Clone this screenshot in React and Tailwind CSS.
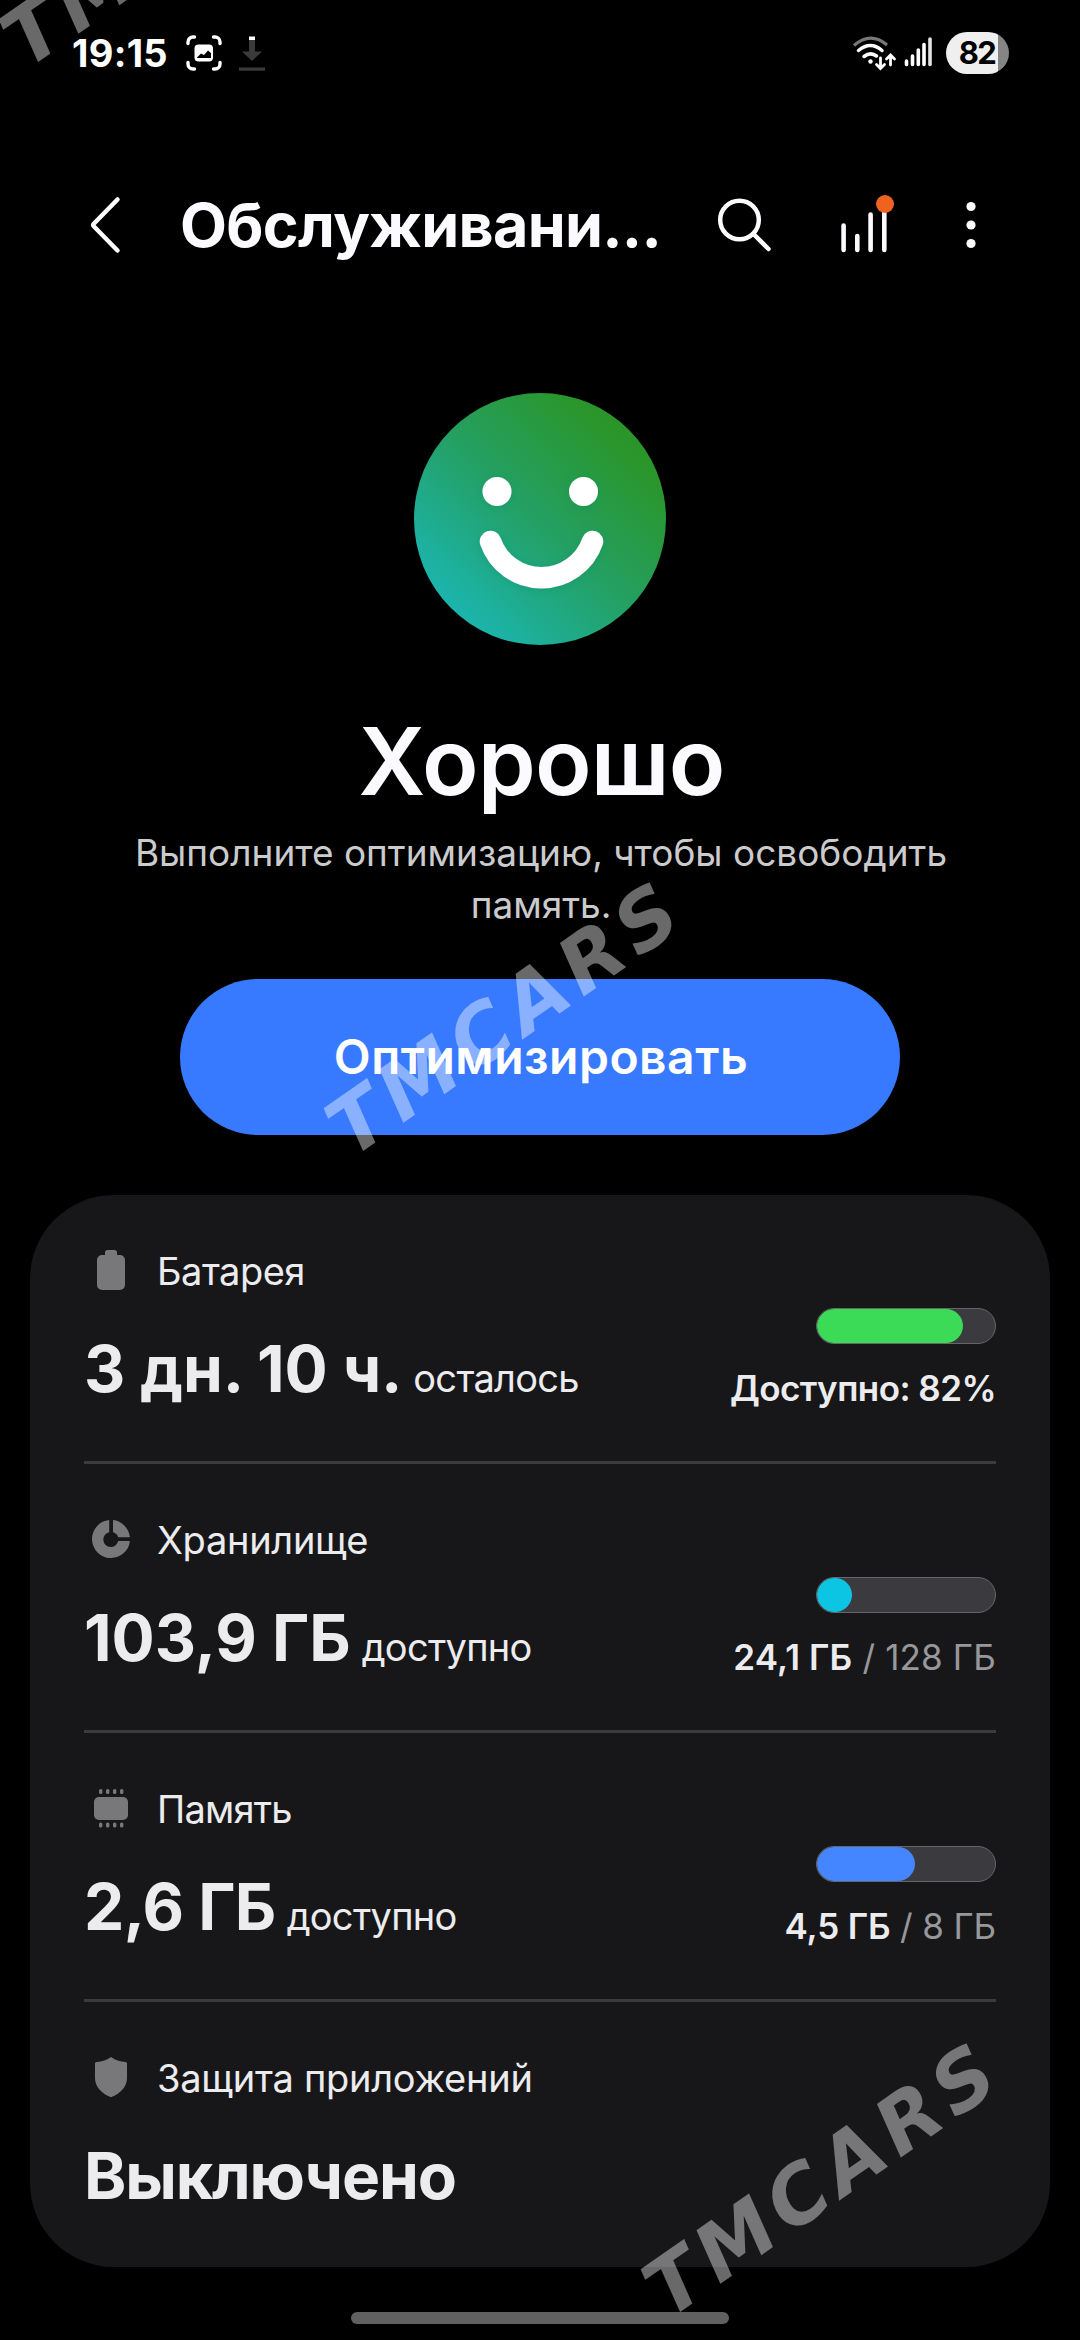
import React from 'react';

const items = [
  {
    id: 'battery',
    label: 'Батарея',
    labelStyle: 'tracking-[-0.5px]',
    value: '3 дн. 10 ч.',
    valueStyle: 'tracking-[-0.1px]',
    suffix: 'осталось',
    percent: 82,
    barColor: 'bg-[#3cdb57]',
    used: 'Доступно: 82%',
    usedStyle: 'tracking-[-0.55px]',
  },
  {
    id: 'storage',
    label: 'Хранилище',
    labelStyle: 'tracking-[-0.3px]',
    value: '103,9 ГБ',
    valueStyle: 'tracking-[0px]',
    suffix: 'доступно',
    percent: 19.5,
    barColor: 'bg-[#0bc5e3]',
    used: '24,1 ГБ',
    total: '/ 128 ГБ',
    usedStyle: 'tracking-[0.15px]',
  },
  {
    id: 'memory',
    label: 'Память',
    labelStyle: 'tracking-[-0.8px]',
    value: '2,6 ГБ',
    valueStyle: 'tracking-[-0.6px]',
    suffix: 'доступно',
    percent: 55,
    barColor: 'bg-[#4486ff]',
    used: '4,5 ГБ',
    total: '/ 8 ГБ',
    usedStyle: 'tracking-[-0.15px]',
  },
  {
    id: 'protection',
    label: 'Защита приложений',
    labelStyle: 'tracking-[-0.27px]',
    value: 'Выключено',
    valueStyle: 'tracking-[-1.1px]',
  },
];

const ItemIcon = ({ id }) => (
  <svg width="40" height="48" viewBox="0 0 40 48" fill="#78787b">
    {id === 'battery' && (
      <path d="M14 5.500a2.500 2.500 0 0 1 2.500-2.500h7a2.500 2.500 0 0 1 2.500 2.500V8h3a5 5 0 0 1 5 5v25a5 5 0 0 1-5 5H11a5 5 0 0 1-5-5V13a5 5 0 0 1 5-5h3z" />
    )}
    {id === 'storage' && (
      <>
        <path d="M18.200 4.100V16.200A7.500 7.500 0 1 0 27.200 25H38.900A19 19 0 1 1 18.200 4.100z" />
        <path d="M22 4.100A19 19 0 0 1 38.900 21.200H27.200A7.500 7.500 0 0 0 22 16.200z" />
      </>
    )}
    {id === 'memory' && (
      <>
        <rect x="3" y="12" width="34" height="23" rx="5" />
        {[8, 15, 22, 29].map(x => (
          <React.Fragment key={x}>
            <rect x={x} y="4" width="3.400" height="5" rx="1.500" />
            <rect x={x} y="37.500" width="3.400" height="5" rx="1.500" />
          </React.Fragment>
        ))}
      </>
    )}
    {id === 'protection' && (
      <path d="M20 3c4 2.800 9 4.600 14.500 5 1 .1 1.500.6 1.500 1.600V24c0 9-6.500 15.500-16 19.200C10.500 39.500 4 33 4 24V9.600c0-1 .5-1.500 1.500-1.600C11 7.600 16 5.800 20 3z" />
    )}
  </svg>
);

const StatusBar = () => (
  <div className="flex h-[106px] items-center justify-between pr-[71px] pl-[72px]">
    <div className="flex items-center">
      <span className="w-[114px] text-[38px] leading-[46px] font-bold tracking-[0.3px] text-white">19:15</span>
      <svg width="36" height="36" viewBox="0 0 36 36" fill="none" stroke="#fff" strokeWidth="3.400" strokeLinecap="round">
        <path d="M2 8.500V7a5 5 0 0 1 5-5h1.500M27.500 2H29a5 5 0 0 1 5 5v1.500M34 27.500V29a5 5 0 0 1-5 5h-1.500M8.500 34H7a5 5 0 0 1-5-5v-1.500" />
        <rect x="8.500" y="9.500" width="18.500" height="17" rx="4" fill="#fff" stroke="none" />
        <path d="M11 22.500l4-4 3 1.500 4-4.500 3 2.500v5H11z" fill="#000" stroke="none" />
      </svg>
      <svg className="ml-[16px]" width="28" height="36" viewBox="0 0 28 36">
        <path d="M11 5h6v11.500h7L14 26 4 16.500h7z" fill="#3a3a3a" />
        <path d="M11 1.500h6V5h-6z" fill="#fff" />
        <path d="M1 32.500h26v3.200H1z" fill="#3a3a3a" />
      </svg>
    </div>
    <div className="flex items-center">
      <svg width="46" height="36" viewBox="0 0 46 36" fill="none" stroke="#fff" strokeWidth="3.500" strokeLinecap="round">
        <path d="M3 10.500Q19.500-4 36 10" stroke="#777" strokeWidth="3.200" strokeLinecap="butt" />
        <path d="M7.500 15.500Q19.500 5.500 31 15.500" />
        <path d="M13 21.500Q19.500 16.500 25.500 21" />
        <circle cx="19.500" cy="26.500" r="2.200" fill="#fff" stroke="none" />
        <path d="M29.500 23v9.500M25.500 29.500l4 4 4-4M39.500 30V20.500M35.500 24l4-4 4 4" strokeWidth="2.800" />
      </svg>
      <svg className="ml-[7px]" width="28" height="36" viewBox="0 0 28 36" stroke="#fff" strokeWidth="3.600" strokeLinecap="round">
        <path d="M2.500 26v3.500M8.500 21v8.500M14.300 15v14.500M20 9.500v20" />
        <path d="M26 4v25.500" stroke="#e4e4e4" />
      </svg>
      <div className="ml-[14px] flex h-[42px] w-[63px] items-center justify-center overflow-hidden rounded-full bg-[linear-gradient(90deg,#efefef_52px,#858585_52px)] pr-[1px] text-[31px] leading-[40px] font-bold tracking-[-1.5px] text-black">
        82
      </div>
    </div>
  </div>
);

const Header = () => (
  <div className="flex h-[238px] items-center pl-[88px]">
    <svg width="34" height="60" viewBox="0 0 34 60" fill="none" stroke="#fcfcff" strokeWidth="4.500" strokeLinecap="round" strokeLinejoin="round">
      <path d="M29.500 4.500L6 28.500q-1.500 1.500 0 3L29.500 55.500" />
    </svg>
    <h1 className="ml-[58px] w-[519px] text-[61px] leading-[76px] font-bold tracking-[-0.7px] whitespace-nowrap text-[#fafaff]">
      Обслуживани...
    </h1>
    <svg className="ml-[17px]" width="60" height="60" viewBox="0 0 60 60" fill="none" stroke="#fcfcff" strokeWidth="4.500" strokeLinecap="round">
      <circle cx="23.500" cy="25" r="19.300" />
      <path d="M38 39.500L52.500 54" />
    </svg>
    <svg className="ml-[64px]" width="60" height="60" viewBox="0 0 60 60">
      <path d="M3.600 30.500v24.500M17.300 41v14M30.600 19.500v35.500M44.300 15v40" stroke="#fcfcff" strokeWidth="4.600" strokeLinecap="round" />
      <circle cx="45" cy="9" r="9" fill="#ee6320" />
    </svg>
    <svg className="ml-[61px]" width="20" height="60" viewBox="0 0 20 60" fill="#fcfcff">
      <circle cx="10" cy="11.500" r="4.600" />
      <circle cx="10" cy="30" r="4.600" />
      <circle cx="10" cy="48.500" r="4.600" />
    </svg>
  </div>
);

const Face = () => (
  <svg width="252" height="252" viewBox="0 0 252 252">
    <defs>
      <linearGradient id="face" x1="0.200" y1="0.880" x2="0.850" y2="0.200">
        <stop offset="0" stopColor="#1bb4ab" />
        <stop offset="0.500" stopColor="#24a063" />
        <stop offset="1" stopColor="#2a9528" />
      </linearGradient>
      <filter id="glow" x="-20%" y="-20%" width="140%" height="140%">
        <feDropShadow dx="0" dy="1" stdDeviation="5" floodColor="#0c8a68" floodOpacity="0.400" />
      </filter>
      <linearGradient id="shine" gradientUnits="userSpaceOnUse" x1="0" y1="150" x2="0" y2="220">
        <stop offset="0.800" stopColor="#fff" />
        <stop offset="1" stopColor="#b5ead8" />
      </linearGradient>
    </defs>
    <circle cx="126" cy="126" r="126" fill="url(#face)" />
    <g filter="url(#glow)">
      <circle cx="83" cy="98.500" r="14.500" fill="#fff" />
      <circle cx="169.500" cy="98.500" r="14.500" fill="#fff" />
      <path d="M76.500 148.500A54 54 0 0 0 178.500 148.500" fill="none" stroke="url(#shine)" strokeWidth="21.500" strokeLinecap="round" />
    </g>
  </svg>
);

const ItemRow = ({ item, last }) => (
  <div className={`flex justify-between ${last ? 'h-[265px]' : 'h-[269px] border-b-[3px] border-[#3b3b3d]'}`}>
    <div className="pt-[52px]">
      <div className="flex items-center gap-[26px] pl-[7px]">
        <ItemIcon id={item.id} />
        <span className={`text-[38px] leading-[48px] whitespace-nowrap ${item.labelStyle}`}>{item.label}</span>
      </div>
      <div className="mt-[34px] flex items-baseline gap-[11px] whitespace-nowrap">
        <span className={`text-[64px] leading-[80px] font-bold ${item.valueStyle}`}>{item.value}</span>
        {item.suffix && <span className="text-[38px] tracking-[-0.7px]">{item.suffix}</span>}
      </div>
    </div>
    {item.used && (
      <div className="flex flex-col items-end pt-[113px]">
        <div className="h-[36px] w-[180px] overflow-hidden rounded-full border border-[#66666a] bg-[#3a3a3f]">
          <div className={`h-full rounded-full ${item.barColor}`} style={{ width: `${item.percent}%` }} />
        </div>
        <div className={`mt-[22px] text-[35px] leading-[44px] font-semibold whitespace-nowrap ${item.usedStyle}`}>
          {item.used}
          {item.total && <span className="font-normal text-[#98989a]"> {item.total}</span>}
        </div>
      </div>
    )}
  </div>
);

const Watermark = ({ place }) => (
  <div
    className={`absolute ${place} flex h-[100px] w-[500px] -translate-x-1/2 -translate-y-1/2 -rotate-35 items-center justify-center font-['DejaVu_Sans',sans-serif] text-[79px] leading-none font-bold tracking-[7.5px] text-white/41 italic`}
  >
    TMCARS
  </div>
);

const App = () => {
  return (
    <div className="relative flex h-[2340px] w-[1080px] flex-col overflow-hidden bg-black font-['Inter',sans-serif] text-[#ececee]">
      <StatusBar />
      <Header />

      <div className="mt-[49px] flex flex-col items-center">
        <Face />
        <h2 className="mt-[60px] pl-[3px] text-[93px] leading-[112px] font-semibold tracking-[-0.8px] text-[#fafaff]">
          Хорошо
        </h2>
        <p className="mt-[10px] w-[860px] pl-[2px] text-center text-[37px] leading-[52px] text-[#cbcbcd]">
          Выполните оптимизацию, чтобы освободить память.
        </p>
        <button className="mt-[48px] h-[156px] w-[720px] rounded-full bg-[#387aff] pl-[2px] text-[48px] font-semibold tracking-[0.5px] text-white">
          Оптимизировать
        </button>
      </div>

      <div className="mx-[30px] mt-[60px] rounded-[84px] bg-[#17171a] px-[54px]">
        {items.map((item, index) => (
          <ItemRow key={item.id} item={item} last={index === items.length - 1} />
        ))}
      </div>

      <div className="mt-[45px] ml-[351px] h-[12px] w-[378px] shrink-0 rounded-full bg-[#606060]" />

      <Watermark place="top-[-71px] left-[181px]" />
      <Watermark place="top-[1018px] left-[506px]" />
      <Watermark place="top-[2179px] left-[823px]" />
    </div>
  );
};

export default App;
